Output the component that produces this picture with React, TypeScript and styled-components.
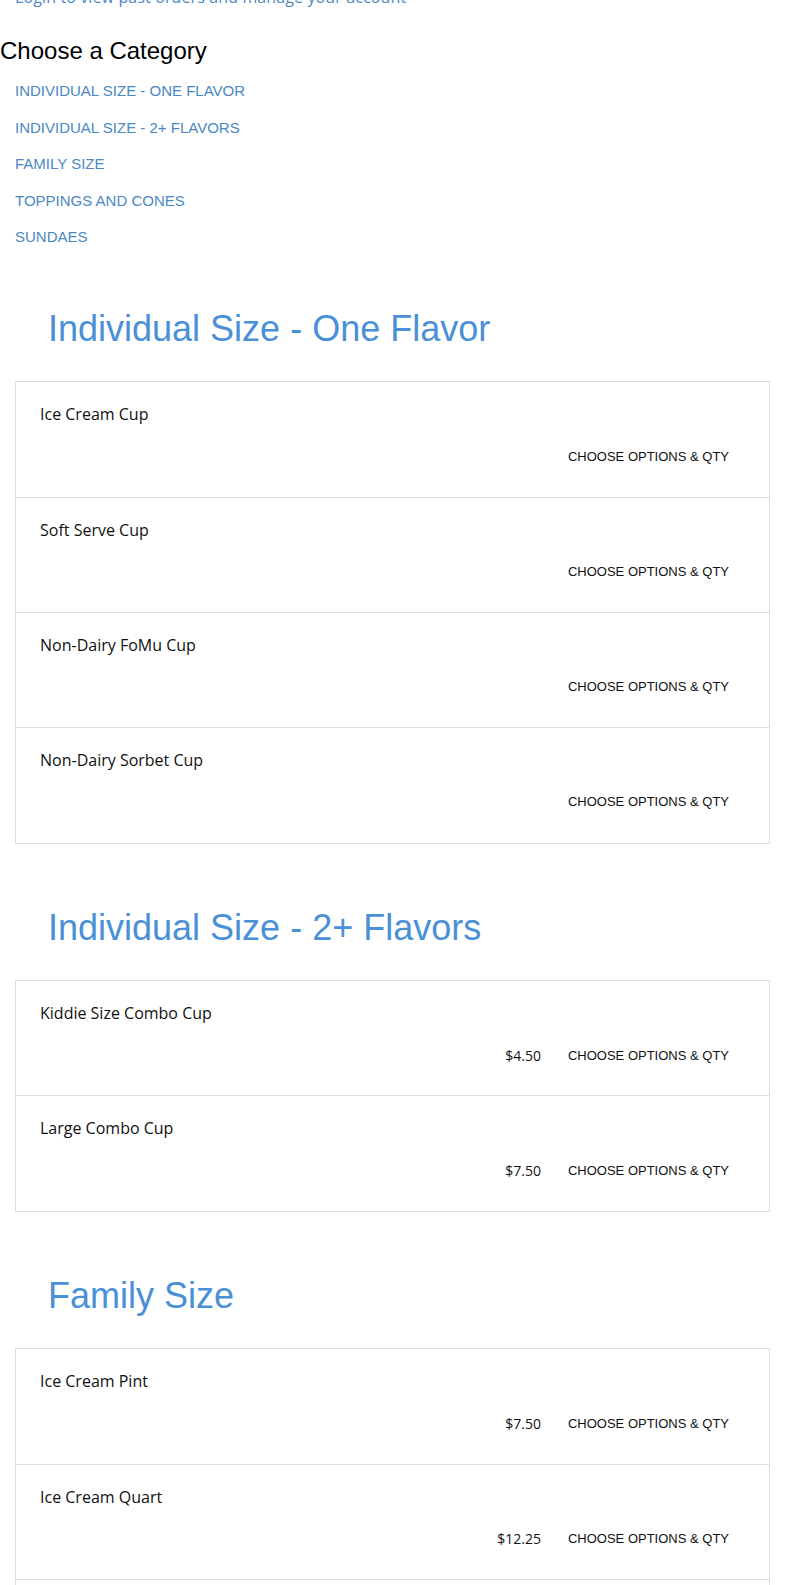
import styled, {createGlobalStyle} from 'styled-components';

interface Item {
    name: string;
    price?: string;
}

interface Category {
    title: string;
    items: Item[];
}

const categories: Category[] = [
    {
        title: 'Individual Size - One Flavor',
        items: [
            {name: 'Ice Cream Cup'},
            {name: 'Soft Serve Cup'},
            {name: 'Non-Dairy FoMu Cup'},
            {name: 'Non-Dairy Sorbet Cup'},
        ],
    },
    {
        title: 'Individual Size - 2+ Flavors',
        items: [
            {name: 'Kiddie Size Combo Cup', price: '$4.50'},
            {name: 'Large Combo Cup', price: '$7.50'},
        ],
    },
    {
        title: 'Family Size',
        items: [
            {name: 'Ice Cream Pint', price: '$7.50'},
            {name: 'Ice Cream Quart', price: '$12.25'},
            {name: 'Ice Cream Half Gallon', price: '$21.00'},
        ],
    },
];

const navLinks = [
    'Individual Size - One Flavor',
    'Individual Size - 2+ Flavors',
    'Family Size',
    'Toppings and Cones',
    'Sundaes',
];

const GlobalStyle = createGlobalStyle`
    html, body {
        margin: 0;
        padding: 0;
        background: #fff;
    }
    body {
        font-family: "Open Sans", "Liberation Sans", sans-serif;
        color: #111;
    }
`;

export default function App() {
    return (
        <Page>
            <GlobalStyle />
            <LoginLink href="#">Login to view past orders and manage your account</LoginLink>
            <PageTitle>Choose a Category</PageTitle>
            <CategoryNav>
                {navLinks.map(label => (
                    <NavItem key={label}><NavLink href="#">{label}</NavLink></NavItem>
                ))}
            </CategoryNav>
            <Sections>
                {categories.map(cat => (
                    <Section key={cat.title}>
                        <SectionTitle>{cat.title}</SectionTitle>
                        <Card>
                            {cat.items.map(item => (
                                <Row key={item.name}>
                                    <ItemName>{item.name}</ItemName>
                                    <Actions>
                                        {item.price && <Price>{item.price}</Price>}
                                        <ChooseButton>Choose Options &amp; Qty</ChooseButton>
                                    </Actions>
                                </Row>
                            ))}
                        </Card>
                    </Section>
                ))}
            </Sections>
        </Page>
    );
}

const Page = styled.div`
    width: 785px;
    padding-bottom: 40px;
`;

// the page is scrolled a little, so only the bottom of this line shows
const LoginLink = styled.a`
    display: block;
    margin: -15.5px 0 0 15px;
    font-size: 16px;
    letter-spacing: 0.12px;
    line-height: 24px;
    color: #4a88c4;
    text-decoration: none;
`;

const PageTitle = styled.h2`
    margin: 28px 0 0;
    font-family: "Liberation Sans", Arial, sans-serif;
    font-weight: normal;
    font-size: 24px;
    line-height: 28.8px;
    color: #000;
`;

const CategoryNav = styled.ul`
    list-style: none;
    margin: 8px 0 0;
    padding: 0 0 0 15px;
    font-family: "Liberation Sans", Arial, sans-serif;
    font-size: 15px;
`;

const NavItem = styled.li`
    padding: 9px 0;
    line-height: 18.4px;
`;

const NavLink = styled.a`
    display: block;
    text-transform: uppercase;
    color: #4a88c4;
    text-decoration: none;
`;

const Sections = styled.div`
    display: flex;
    flex-direction: column;
    gap: 64px;
    margin-top: 54px;
    padding: 0 15px;
`;

const Section = styled.section``;

const SectionTitle = styled.h2`
    margin: 0;
    padding-left: 33px;
    font-family: "Liberation Sans", Arial, sans-serif;
    font-weight: normal;
    font-size: 36px;
    line-height: 40px;
    color: #4a90d6;
`;

const Card = styled.div`
    margin-top: 32px;
    border: 1px solid #ddd;
`;

const Row = styled.div`
    display: flex;
    flex-direction: column;
    height: 115.2px;
    box-sizing: border-box;
    padding: 20px 40px 0 24px;
    border-bottom: 1px solid #ddd;

    &:last-child {
        border-bottom: none;
    }
`;

const ItemName = styled.div`
    font-size: 16px;
    line-height: 24px;
`;

const Actions = styled.div`
    display: flex;
    justify-content: flex-end;
    align-items: center;
    gap: 27px;
    margin-top: 18px;
    height: 24px;
`;

const Price = styled.span`
    font-size: 14px;
`;

const ChooseButton = styled.button`
    border: none;
    background: none;
    padding: 0;
    font-family: "Liberation Sans", Arial, sans-serif;
    font-size: 13px;
    text-transform: uppercase;
    color: #111;
    cursor: pointer;
`;
